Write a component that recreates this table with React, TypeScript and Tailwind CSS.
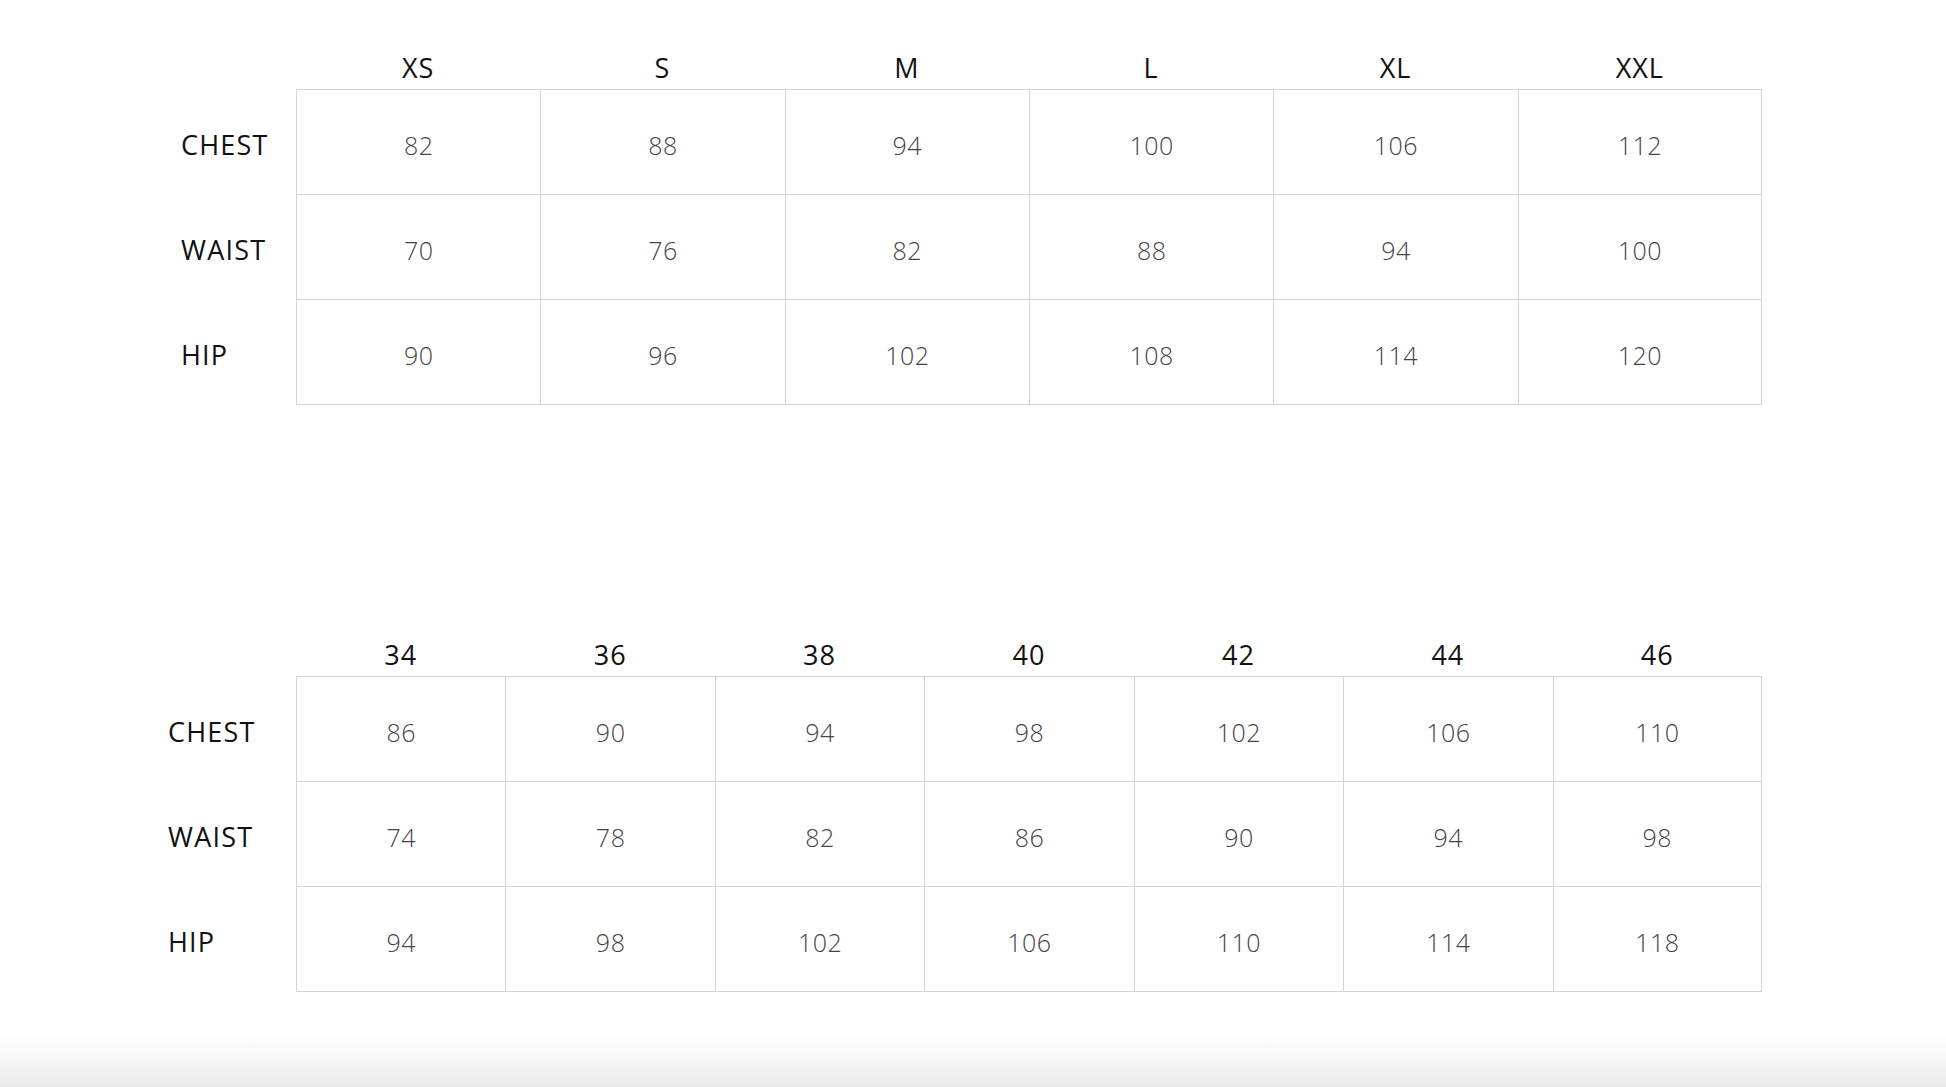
import React from "react";

const font = { fontFamily: '"Open Sans", "Liberation Sans", sans-serif' };

type TableProps = {
  sizes: string[];
  rows: { label: string; values: number[] }[];
  labelPad: string;
  cols: string;
};

function SizeTable({ sizes, rows, labelPad, cols }: TableProps) {
  return (
    <div className={`grid ${cols} w-[1762px]`}>
      <div className="h-[44px]" />
      {sizes.map((s) => (
        <div
          key={s}
          className="h-[44px] flex items-center justify-center pt-[3px] text-[27px] text-[#111] tracking-[1px]"
        >
          {s}
        </div>
      ))}
      {rows.map((r, ri) => (
        <React.Fragment key={r.label}>
          <div
            className={`${ri === rows.length - 1 ? "h-[106px]" : "h-[105px]"} flex items-center pt-[7px] ${labelPad} text-[27px] text-[#111] tracking-[1.2px]`}
          >
            {r.label}
          </div>
          {r.values.map((v, ci) => (
            <div
              key={ci}
              className={`${ri === rows.length - 1 ? "h-[106px] border-b" : "h-[105px]"} flex items-center justify-center pt-[7px] border-l border-t border-[#d5d5d5] text-[25px] font-light text-[#444] tracking-[0.5px] ${
                ci === r.values.length - 1 ? "border-r" : ""
              }`}
            >
              {v}
            </div>
          ))}
        </React.Fragment>
      ))}
    </div>
  );
}

export default function App() {
  return (
    <div
      style={font}
      className="w-full h-[1087px] bg-[linear-gradient(to_bottom,#ffffff_0%,#ffffff_95%,#f4f4f4_98%,#e8e8e8_100%)] overflow-hidden"
    >
      <div className="pt-[45px]">
        <SizeTable
          cols="grid-cols-[296px_repeat(6,minmax(0,1fr))]"
          labelPad="pl-[181px]"
          sizes={["XS", "S", "M", "L", "XL", "XXL"]}
          rows={[
            { label: "CHEST", values: [82, 88, 94, 100, 106, 112] },
            { label: "WAIST", values: [70, 76, 82, 88, 94, 100] },
            { label: "HIP", values: [90, 96, 102, 108, 114, 120] },
          ]}
        />
      </div>
      <div className="pt-[227px]">
        <SizeTable
          cols="grid-cols-[296px_repeat(7,minmax(0,1fr))]"
          labelPad="pl-[168px]"
          sizes={["34", "36", "38", "40", "42", "44", "46"]}
          rows={[
            { label: "CHEST", values: [86, 90, 94, 98, 102, 106, 110] },
            { label: "WAIST", values: [74, 78, 82, 86, 90, 94, 98] },
            { label: "HIP", values: [94, 98, 102, 106, 110, 114, 118] },
          ]}
        />
      </div>
    </div>
  );
}
